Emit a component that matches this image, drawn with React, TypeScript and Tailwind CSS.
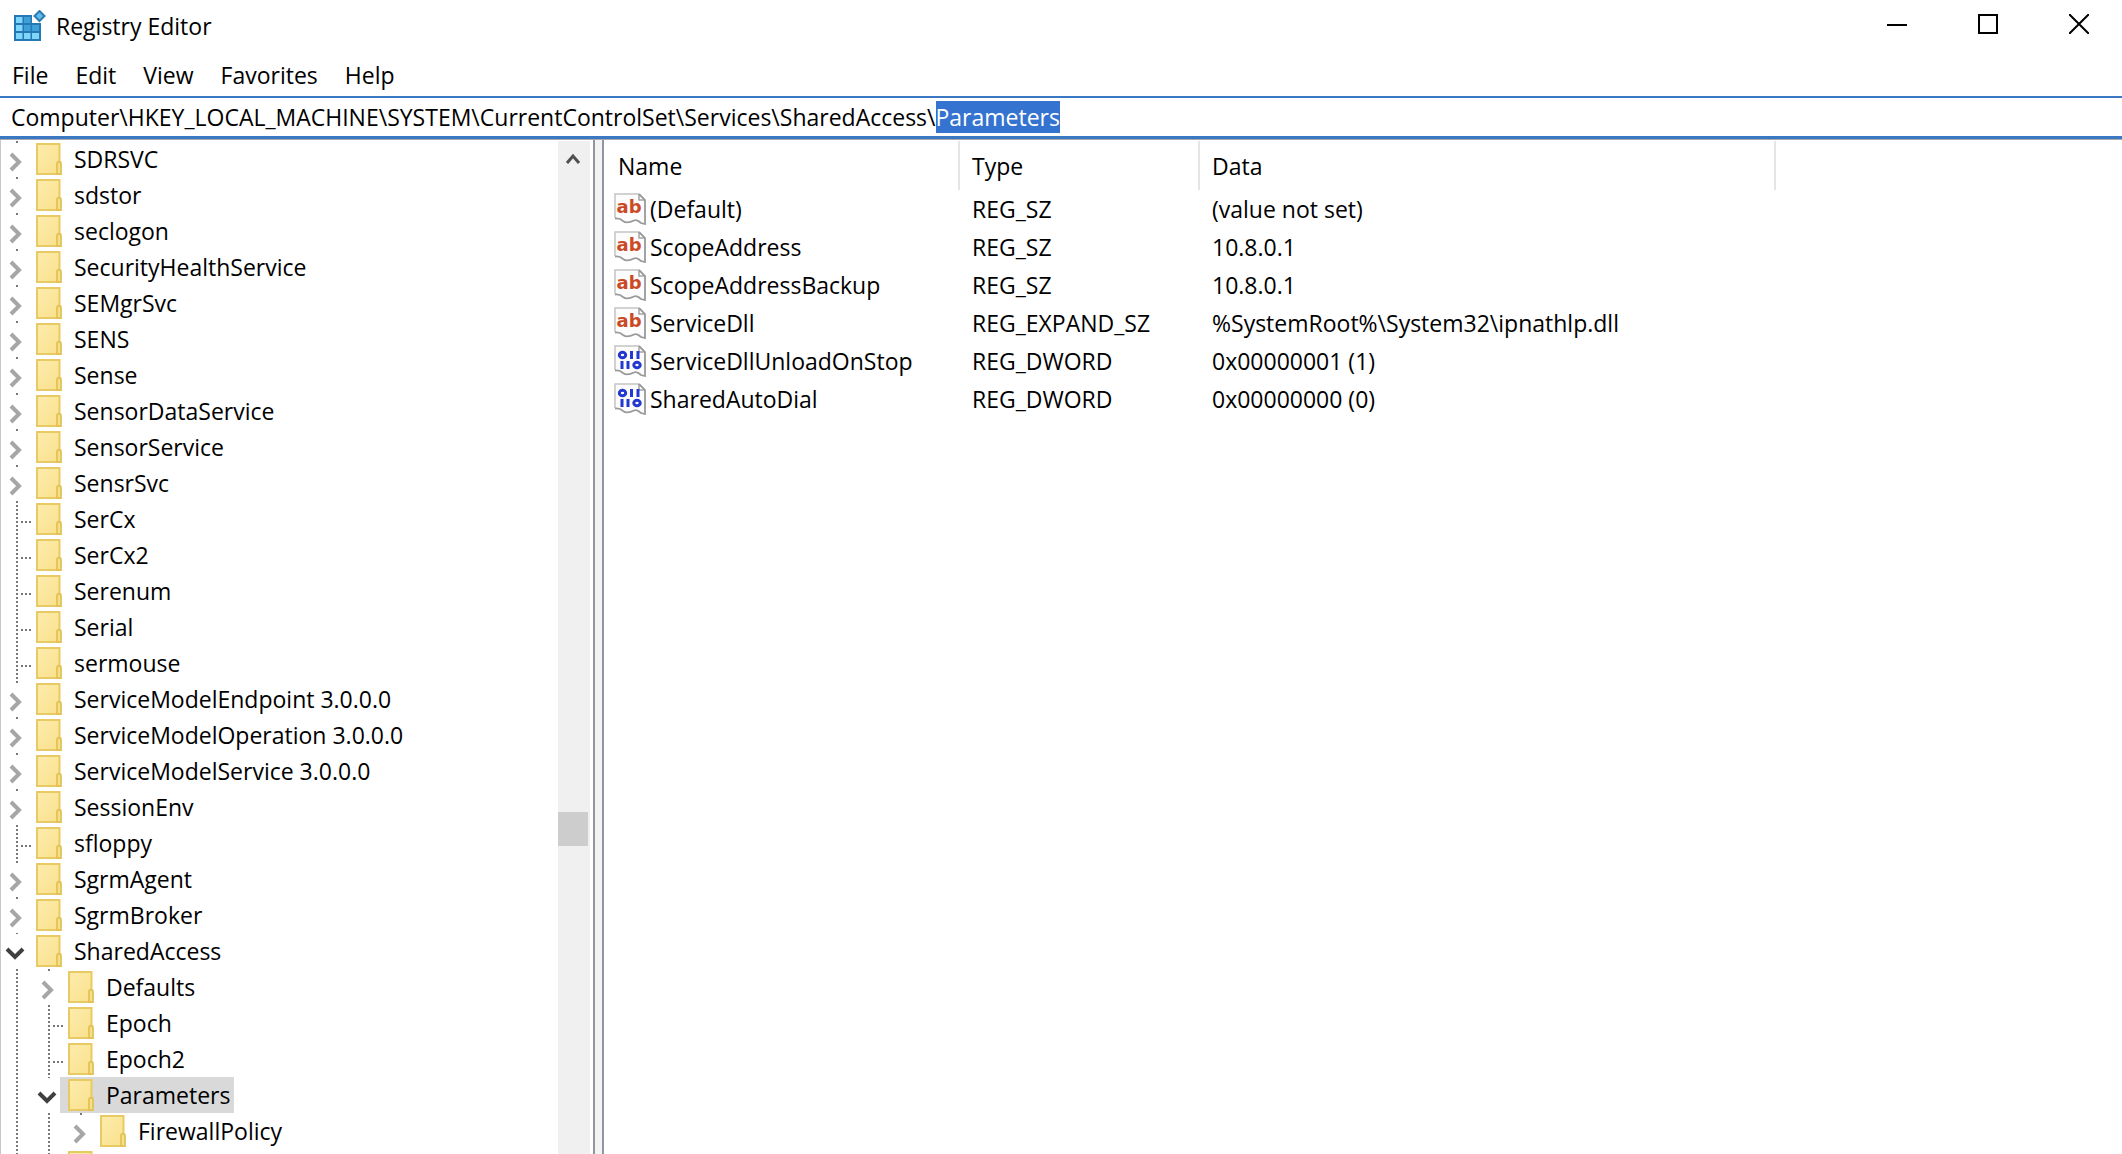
import React, { useEffect, useRef, useState } from 'react'

type Node = { name: string; level: number; state: 'closed' | 'open' | 'leaf'; selected?: boolean }

const nodes: Node[] = [
  { name: 'SDRSVC', level: 0, state: 'closed' },
  { name: 'sdstor', level: 0, state: 'closed' },
  { name: 'seclogon', level: 0, state: 'closed' },
  { name: 'SecurityHealthService', level: 0, state: 'closed' },
  { name: 'SEMgrSvc', level: 0, state: 'closed' },
  { name: 'SENS', level: 0, state: 'closed' },
  { name: 'Sense', level: 0, state: 'closed' },
  { name: 'SensorDataService', level: 0, state: 'closed' },
  { name: 'SensorService', level: 0, state: 'closed' },
  { name: 'SensrSvc', level: 0, state: 'closed' },
  { name: 'SerCx', level: 0, state: 'leaf' },
  { name: 'SerCx2', level: 0, state: 'leaf' },
  { name: 'Serenum', level: 0, state: 'leaf' },
  { name: 'Serial', level: 0, state: 'leaf' },
  { name: 'sermouse', level: 0, state: 'leaf' },
  { name: 'ServiceModelEndpoint 3.0.0.0', level: 0, state: 'closed' },
  { name: 'ServiceModelOperation 3.0.0.0', level: 0, state: 'closed' },
  { name: 'ServiceModelService 3.0.0.0', level: 0, state: 'closed' },
  { name: 'SessionEnv', level: 0, state: 'closed' },
  { name: 'sfloppy', level: 0, state: 'leaf' },
  { name: 'SgrmAgent', level: 0, state: 'closed' },
  { name: 'SgrmBroker', level: 0, state: 'closed' },
  { name: 'SharedAccess', level: 0, state: 'open' },
  { name: 'Defaults', level: 1, state: 'closed' },
  { name: 'Epoch', level: 1, state: 'leaf' },
  { name: 'Epoch2', level: 1, state: 'leaf' },
  { name: 'Parameters', level: 1, state: 'open', selected: true },
  { name: 'FirewallPolicy', level: 2, state: 'closed' },
  { name: '', level: 1, state: 'leaf' },
]

const values = [
  { name: '(Default)', type: 'REG_SZ', data: '(value not set)' },
  { name: 'ScopeAddress', type: 'REG_SZ', data: '10.8.0.1' },
  { name: 'ScopeAddressBackup', type: 'REG_SZ', data: '10.8.0.1' },
  { name: 'ServiceDll', type: 'REG_EXPAND_SZ', data: '%SystemRoot%\\System32\\ipnathlp.dll' },
  { name: 'ServiceDllUnloadOnStop', type: 'REG_DWORD', data: '0x00000001 (1)' },
  { name: 'SharedAutoDial', type: 'REG_DWORD', data: '0x00000000 (0)' },
]

function AppIcon() {
  return (
    <svg width="32" height="32" viewBox="0 0 32 32" className="shrink-0">
      <path d="M0 5H18V13H27V31H0Z" fill="#2478b6" />
      <g fill="#7fd6fb">
        <rect x="2" y="7" width="6.500" height="6" />
        <rect x="2" y="15" width="6.500" height="6" />
        <rect x="2" y="23" width="6.500" height="6" />
        <rect x="10" y="23" width="6.500" height="6" />
        <rect x="18" y="23" width="7" height="6" />
      </g>
      <g fill="#3f9fd8">
        <rect x="10" y="7" width="6.500" height="6" />
        <rect x="10" y="15" width="6.500" height="6" />
        <rect x="18" y="15" width="7" height="6" />
      </g>
      <path d="M25.500 1L30.500 6L25.500 11L20.500 6Z" fill="#5cbdec" stroke="#2b7ab0" strokeWidth="2" />
    </svg>
  )
}

function Folder() {
  return (
    <svg width="26" height="32" viewBox="0 0 26 32" className="shrink-0">
      <defs>
        <linearGradient id="folder" x1="0" y1="0" x2="1" y2="1">
          <stop offset="0" stopColor="#fdecae" />
          <stop offset="1" stopColor="#f9e08a" />
        </linearGradient>
      </defs>
      <rect x="1" y="1" width="22.500" height="30" fill="url(#folder)" stroke="#e8ca62" strokeWidth="2" />
      <path d="M21 31V20.500Q21 19 22.500 19H23.500Q25 19 25 20.500V31Z" fill="#f7df8c" stroke="#e3c258" strokeWidth="1.800" />
    </svg>
  )
}

function ValueIcon({ text }: { text: boolean }) {
  return (
    <svg width="32" height="32" viewBox="0 0 32 32" className="shrink-0">
      <path d="M1 25V1H25L31 7V31L26 30L22 27L18 28L13 30L8 28L5 26Z" fill="#fcfcfc" />
      <path d="M1 25V1H25" fill="none" stroke="#c4c4c4" strokeWidth="1.500" />
      <path d="M25 1V7H31" fill="#fff" stroke="#a5a5a5" strokeWidth="1.500" />
      <path d="M25 1L31 7V31L27 30Q23 26 20 27.500Q13 31 9 28Q6 25 1 25.500" fill="none" stroke="#9a9a9a" strokeWidth="1.800" />
      {text ? (
        <text x="15" y="20" textAnchor="middle" fontFamily="DejaVu Sans, sans-serif" fontWeight="700" fontSize="18" fill="#cb4a26">ab</text>
      ) : (
        <g fill="none" stroke="#2338cf" strokeWidth="3">
          <ellipse cx="8.500" cy="10" rx="3.200" ry="2.800" />
          <path d="M17.500 6V14M24 6V14M8 16V24M14 16V24" />
          <ellipse cx="23" cy="20" rx="3.200" ry="2.800" />
        </g>
      )}
    </svg>
  )
}

// connector lines and expand arrow of one tree level
function Gutter({ node }: { node: Node }) {
  return (
    <svg width="32" height="36" viewBox="0 0 32 36" className="shrink-0">
      {node.state === 'leaf' && (
        <g stroke="#777" strokeWidth="2" strokeDasharray="2 2" fill="none">
          <path d="M13 0V36" />
          <path d="M17 21H28" />
        </g>
      )}
      {node.state === 'closed' && (
        <g fill="none">
          <path d="M13 0V2" stroke="#777" strokeWidth="2" />
          <path d="M7 13L15 21L7 29" stroke="#a6a6a6" strokeWidth="4" />
        </g>
      )}
      {node.state === 'open' && (
        <g fill="none">
          <path d="M13 0V1" stroke="#777" strokeWidth="2" />
          <path d="M3 16L11 24L19 16" stroke="#404040" strokeWidth="4" />
        </g>
      )}
    </svg>
  )
}

function Line() {
  return (
    <svg width="32" height="36" viewBox="0 0 32 36" className="shrink-0">
      <path d="M13 0V36" stroke="#777" strokeWidth="2" strokeDasharray="2 2" />
    </svg>
  )
}

function TreeRow({ node }: { node: Node }) {
  return (
    <li className="flex h-9 items-center pl-[3px]">
      {node.level > 0 && <Line />}
      {node.level > 1 && <Line />}
      <Gutter node={node} />
      <span className={node.selected ? '-ml-2 flex h-9 items-center bg-[#d9d9d9] pl-2 pr-1' : 'flex h-9 items-center'}>
        <Folder />
        <span className="ml-3 whitespace-nowrap leading-8">{node.name}</span>
      </span>
    </li>
  )
}

function AddressBar() {
  const [path, setPath] = useState('Computer\\HKEY_LOCAL_MACHINE\\SYSTEM\\CurrentControlSet\\Services\\SharedAccess\\Parameters')
  const input = useRef<HTMLInputElement>(null)

  // start with the last key of the path selected
  useEffect(() => {
    const el = input.current
    if (!el) return
    el.focus()
    el.setSelectionRange(el.value.lastIndexOf('\\') + 1, el.value.length)
  }, [])

  return (
    <input
      ref={input}
      type="text"
      aria-label="Address"
      spellCheck={false}
      value={path}
      onChange={(e) => setPath(e.target.value)}
      className="h-[43px] w-full shrink-0 border-t-2 border-b-3 border-[#3a78c3] pl-[11px] caret-[#e8833a] outline-none selection:bg-[#3474d0] selection:text-white"
    />
  )
}

export default function App() {
  return (
    <div className="flex h-screen flex-col overflow-hidden bg-white font-['Open_Sans',sans-serif] text-[23px] leading-8 text-black">
      <header className="flex h-13 shrink-0 items-center pl-[14px]">
        <AppIcon />
        <h1 className="ml-[10px]">Registry Editor</h1>
        <div className="ml-auto flex gap-[5px] self-start">
          <button aria-label="Minimize" className="flex h-12 w-[86px] items-center justify-center">
            <svg width="20" height="20" viewBox="0 0 20 20"><path d="M0 11H20" stroke="#000" strokeWidth="2" /></svg>
          </button>
          <button aria-label="Maximize" className="flex h-12 w-[86px] items-center justify-center">
            <svg width="20" height="20" viewBox="0 0 20 20"><rect x="1" y="1" width="18" height="18" fill="none" stroke="#000" strokeWidth="2" /></svg>
          </button>
          <button aria-label="Close" className="flex h-12 w-[86px] items-center justify-center">
            <svg width="20" height="20" viewBox="0 0 20 20"><path d="M0 0L20 20M20 0L0 20" stroke="#000" strokeWidth="2" /></svg>
          </button>
        </div>
      </header>

      <nav className="flex h-11 shrink-0 items-center gap-[27px] pt-[2px] pl-3">
        <button>File</button>
        <button>Edit</button>
        <button>View</button>
        <button>Favorites</button>
        <button>Help</button>
      </nav>

      <AddressBar />

      <main className="flex min-h-0 flex-1 border-t border-[#a9a9ad]">
        <aside className="flex w-[595px] shrink-0 border-l border-r-2 border-l-[#c8c8cc] border-r-[#8f969f] pt-px">
          <ul className="flex-1 overflow-hidden">
            {nodes.map((node, i) => <TreeRow key={i} node={node} />)}
          </ul>
          <div className="mr-[3px] flex w-8 flex-col bg-[#f0f0f0]">
            <button aria-label="Scroll up" className="flex h-9 w-[30px] items-center justify-center">
              <svg width="16" height="14" viewBox="0 0 16 14"><path d="M2 11L8 4L14 11" fill="none" stroke="#505050" strokeWidth="3" /></svg>
            </button>
            <div className="mt-[635px] h-[34px] w-[30px] bg-[#cdcdcd]" />
          </div>
        </aside>
        <div className="w-[7px] shrink-0 bg-[#f3f3f3]" />
        <section className="min-w-0 flex-1 border-l-2 border-[#8f969f] pt-px">
          <table className="table-fixed border-collapse">
            <thead>
              <tr className="h-[49px] text-left">
                <th className="w-[355px] border-r-2 border-[#e5e5e5] pl-[14px] font-normal">Name</th>
                <th className="w-[240px] border-r-2 border-[#e5e5e5] pl-3 font-normal">Type</th>
                <th className="w-[576px] border-r-2 border-[#e5e5e5] pl-3 font-normal">Data</th>
              </tr>
            </thead>
            <tbody>
              {values.map((v) => (
                <tr key={v.name} className="h-[38px]">
                  <td className="p-0 pl-[10px]">
                    <div className="flex items-center gap-1">
                      <ValueIcon text={v.type !== 'REG_DWORD'} />
                      <span>{v.name}</span>
                    </div>
                  </td>
                  <td className="p-0 pl-[13px]">{v.type}</td>
                  <td className="p-0 pl-[13px]">{v.data}</td>
                </tr>
              ))}
            </tbody>
          </table>
        </section>
      </main>
    </div>
  )
}
